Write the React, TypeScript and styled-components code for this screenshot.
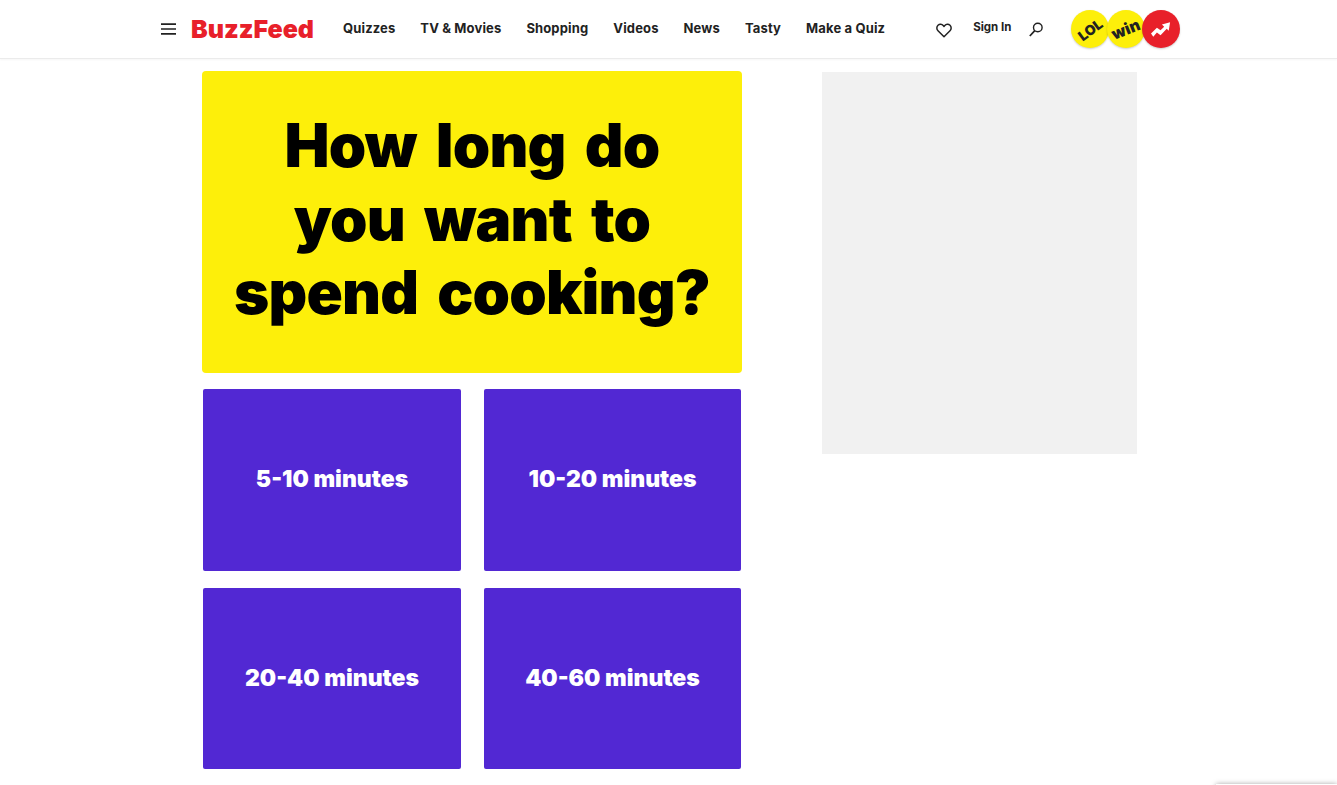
import React from "react";
import styled, { createGlobalStyle } from "styled-components";

const Global = createGlobalStyle`
  html, body { margin: 0; padding: 0; background: #fff; height: 785px; overflow: hidden; }
  body { font-family: "Inter", "Liberation Sans", sans-serif; color: #000; }
`;

const Page = styled.div`
  position: relative;
  width: 1337px;
  height: 785px;
  overflow: hidden;
`;

const Header = styled.header`
  height: 58px;
  display: flex;
  align-items: center;
  padding-left: 161px;
  border-bottom: 1px solid #ebebeb;
  box-shadow: 0 1px 2px rgba(0, 0, 0, 0.04);
`;

const IconButton = styled.span<{ $ml?: number; $mt?: number }>`
  display: flex;
  margin-left: ${(p) => p.$ml ?? 0}px;
  margin-top: ${(p) => p.$mt ?? 0}px;
`;

const Logo = styled.span`
  font-weight: 900;
  font-size: 25px;
  letter-spacing: 0;
  color: #e8202a;
  margin-left: 15px;
  width: 123px;
  white-space: nowrap;
  margin-top: -1px;
`;

const Nav = styled.nav`
  display: flex;
  gap: 25px;
  margin-left: 29px;
`;

const NavLink = styled.a`
  font-size: 13px;
  font-weight: 700;
  letter-spacing: 0.14px;
  color: #222;
  white-space: nowrap;
  margin-top: -3px;
`;

const SignIn = styled.span`
  font-size: 11.5px;
  font-weight: 700;
  color: #222;
  margin-left: 21px;
  margin-top: -5px;
  white-space: nowrap;
`;

const Badges = styled.div`
  display: flex;
  margin-left: 28px;
`;

const Badge = styled.div<{ $bg: string }>`
  width: 38px;
  height: 38px;
  border-radius: 50%;
  background: ${(p) => p.$bg};
  box-shadow: 0 1px 2px rgba(0, 0, 0, 0.2);
  display: flex;
  align-items: center;
  justify-content: center;
  margin-right: -2.5px;
  font-weight: 900;
  color: #222;
`;

const BadgeText = styled.span<{ $angle: number; $size: number }>`
  display: block;
  font-size: ${(p) => p.$size}px;
  transform: rotate(${(p) => p.$angle}deg);
`;

const Main = styled.main`
  display: flex;
  align-items: flex-start;
  padding: 12px 0 0 202px;
`;

const Column = styled.section`
  width: 540px;
  display: flex;
  flex-direction: column;
  gap: 16px;
`;

const Question = styled.div`
  height: 302px;
  background: #fdef0a;
  border-radius: 4px;
  display: flex;
  align-items: center;
  justify-content: center;
  text-align: center;
`;

const QuestionText = styled.h1`
  margin: -5px 0 0;
  font-size: 60px;
  line-height: 73.5px;
  font-weight: 900;
  letter-spacing: -0.8px;
  word-spacing: 8px;
  color: #000;
`;

const Grid = styled.div`
  display: grid;
  grid-template-columns: 258px 257px;
  grid-template-rows: 182px 181px;
  column-gap: 23px;
  row-gap: 17px;
  padding-left: 1px;
`;

const Option = styled.button`
  border: 0;
  border-radius: 2px;
  background: #5228d3;
  color: #fff;
  font-family: inherit;
  font-size: 23px;
  font-weight: 900;
  padding: 0 0 2px;
`;

const Ad = styled.aside`
  width: 315px;
  height: 382px;
  margin: 1px 0 0 80px;
  background: #f1f1f1;
`;

const Recaptcha = styled.div`
  position: absolute;
  left: 1216px;
  top: 784px;
  width: 121px;
  height: 60px;
  background: #fff;
  box-shadow: 0 0 5px rgba(0, 0, 0, 0.35);
`;

const links = ["Quizzes", "TV & Movies", "Shopping", "Videos", "News", "Tasty", "Make a Quiz"];
const options = ["5-10 minutes", "10-20 minutes", "20-40 minutes", "40-60 minutes"];

export default function App() {
  return (
    <Page>
      <Global />
      <Header>
        <IconButton>
          <svg width="15" height="12" viewBox="0 0 15 12" fill="none" stroke="#222" strokeWidth="1.7">
            <path d="M0 1.2h15M0 6h15M0 10.8h15" />
          </svg>
        </IconButton>
        <Logo>BuzzFeed</Logo>
        <Nav>
          {links.map((l) => (
            <NavLink key={l}>{l}</NavLink>
          ))}
        </Nav>
        <IconButton $ml={51} $mt={2}>
          <svg width="16" height="15" viewBox="0 0 16 15" fill="none" stroke="#222" strokeWidth="1.5" strokeLinejoin="round">
            <path d="M8 13.8 2 7.8C.4 6.2.5 3.8 2 2.3c1.6-1.4 3.900-1.200 5.200.3l.8.9.8-.9c1.300-1.500 3.600-1.700 5.200-.3 1.500 1.500 1.600 3.900 0 5.500z" />
          </svg>
        </IconButton>
        <SignIn>Sign In</SignIn>
        <IconButton $ml={18} $mt={1}>
          <svg width="14" height="15" viewBox="0 0 14 15" fill="none" stroke="#222" strokeWidth="1.4">
            <circle cx="8.800" cy="5.500" r="4.300" />
            <path d="M5.800 8.700.8 14" strokeWidth="1.700" />
          </svg>
        </IconButton>
        <Badges>
          <Badge $bg="#fdef0a">
            <BadgeText $angle={-36} $size={14}>LOL</BadgeText>
          </Badge>
          <Badge $bg="#fdef0a">
            <BadgeText $angle={-22} $size={16}>win</BadgeText>
          </Badge>
          <Badge $bg="#e8202a">
            <svg width="20" height="16" viewBox="0 0 22 17" fill="#fff">
              <path d="M2.500 17 0 13.500 6.500 7l4 3L14.500 6 12 3.500 21 1l-1.500 9.500-2.200-2.200-6.800 7-4-3z" />
            </svg>
          </Badge>
        </Badges>
      </Header>
      <Main>
        <Column>
          <Question>
            <QuestionText>
              How long do
              <br />
              you want to
              <br />
              spend cooking?
            </QuestionText>
          </Question>
          <Grid>
            {options.map((o) => (
              <Option key={o}>{o}</Option>
            ))}
          </Grid>
        </Column>
        <Ad />
      </Main>
      <Recaptcha />
    </Page>
  );
}
